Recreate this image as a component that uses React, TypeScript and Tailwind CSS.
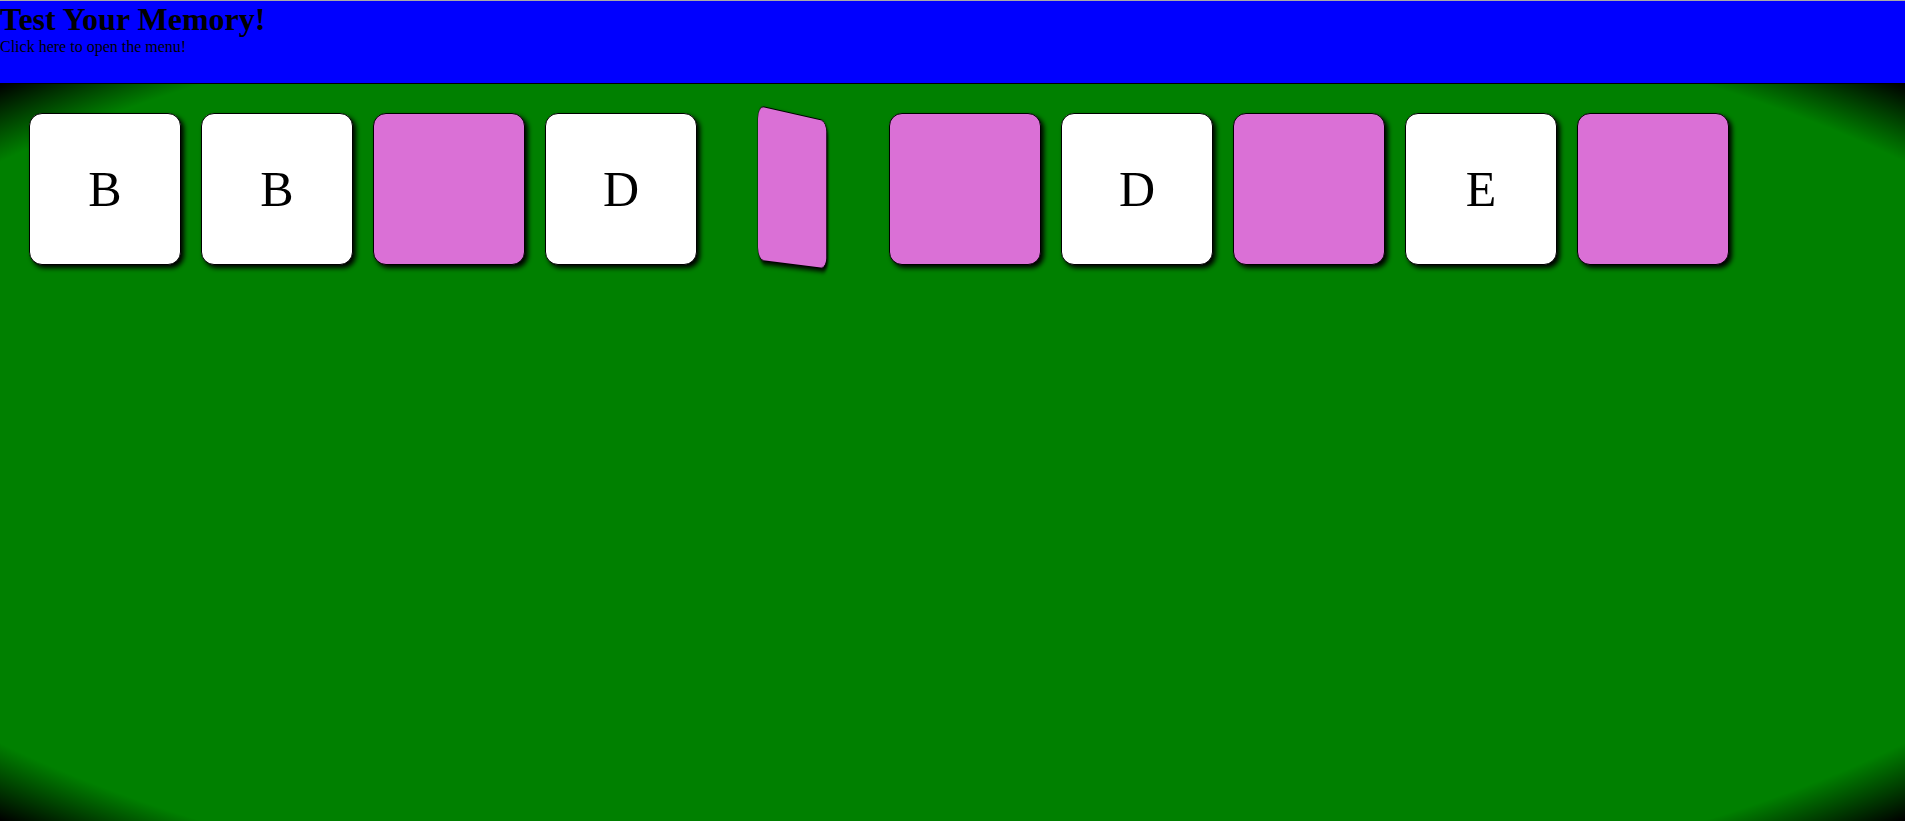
import React from "react";

type Card = { face?: string; flipping?: boolean };

const cards: Card[] = [
  { face: "B" },
  { face: "B" },
  {},
  { face: "D" },
  { flipping: true },
  {},
  { face: "D" },
  {},
  { face: "E" },
  {},
];

export default function App() {
  return (
    <div
      className="flex h-[821px] w-full flex-col overflow-hidden"
      style={{ fontFamily: '"Liberation Serif", "Times New Roman", serif' }}
    >
      <header className="h-[84px] shrink-0 border-t border-b border-t-[#a9a9a9] border-b-black bg-[#0000ff] text-black">
        <h1 className="m-0 text-[32px] leading-[36.8px] font-bold">Test Your Memory!</h1>
        <p className="m-0 text-[16px] leading-[18.4px]">Click here to open the menu!</p>
      </header>
      <main className="flex flex-1 items-start gap-[20px] bg-[radial-gradient(ellipse_at_center,#008000_90%,#000000_100%)] pt-[29px] pl-[29px] [perspective:3000px]">
        {cards.map((c, i) => {
          if (c.flipping) {
            return (
              <div
                key={i}
                className="h-[152px] w-[152px] shrink-0 rounded-[13px] border border-black bg-[#da70d6] shadow-[3px_3px_5px_#000] [transform:rotateY(66deg)]"
              />
            );
          }
          if (c.face) {
            return (
              <div
                key={i}
                className="flex h-[152px] w-[152px] shrink-0 items-center justify-center rounded-[13px] border border-black bg-white text-[50px] text-black shadow-[3px_3px_5px_#000]"
              >
                {c.face}
              </div>
            );
          }
          return (
            <div
              key={i}
              className="h-[152px] w-[152px] shrink-0 rounded-[13px] border border-black bg-[#da70d6] shadow-[3px_3px_5px_#000]"
            />
          );
        })}
      </main>
    </div>
  );
}
